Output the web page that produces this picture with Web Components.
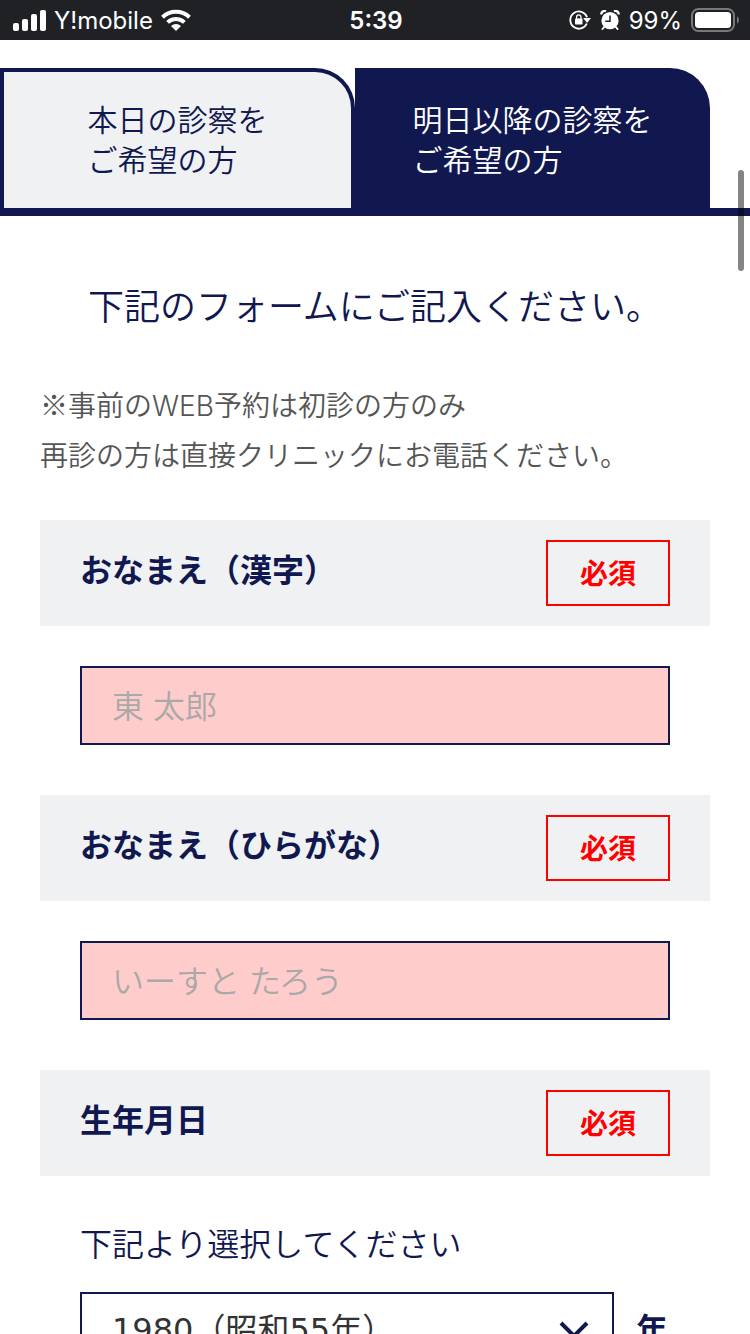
<!DOCTYPE html>
<html lang="ja">
<head>
<meta charset="utf-8">
<meta name="viewport" content="width=device-width">
<title>WEB予約フォーム</title>
<style>
:root { --navy: #111850; --panel: #f0f1f3; --red: #ff0000; --pink: #ffcccc; }
body { margin: 0; background: #fff; color: var(--navy); font-family: Inter, "Noto Sans CJK JP", sans-serif; font-weight: 350; }
</style>
</head>
<body>
<booking-page></booking-page>
<script>
const define = (name, html, setup) => {
  const template = document.createElement('template');
  template.innerHTML = html;
  customElements.define(name, class extends HTMLElement {
    constructor() {
      super();
      this.attachShadow({ mode: 'open' }).append(template.content.cloneNode(true));
    }
    connectedCallback() { if (setup) setup(this, this.shadowRoot); }
  });
};

define('status-bar', `
<style>
:host { display: grid; grid-template-columns: 1fr auto 1fr; align-items: center; height: 40px; padding: 0 11px 0 13px; background: #202125; color: #fff; font-size: 24px; line-height: 38px; font-weight: 400; }
div { display: flex; align-items: center; }
.left { gap: 8px; }
.right { justify-content: flex-end; gap: 9px; }
span { padding-top: 2px; }
.time { font-weight: 600; }
svg { display: block; flex: none; }
</style>
<div class="left">
  <svg width="33" height="21" viewBox="0 0 33 21" fill="#fff"><rect y="13" width="6" height="8" rx="2"/><rect x="9" y="9" width="6" height="12" rx="2"/><rect x="18" y="4" width="6" height="17" rx="2"/><rect x="27" width="6" height="21" rx="2"/></svg>
  <span>Y!mobile</span>
  <svg width="30" height="22" viewBox="0 0 30 22" fill="none" stroke="#fff" stroke-width="4"><path d="M1.500 8.200a19.500 19.500 0 0 1 27 0"/><path d="M6.600 13.400a12 12 0 0 1 16.800 0"/><path d="M15 22l-5-5.100a7.300 7.300 0 0 1 10 0z" fill="#fff" stroke="none"/></svg>
</div>
<div class="time"><span>5:39</span></div>
<div class="right">
  <svg width="22" height="20" viewBox="0 0 22 20"><path d="M17.800 13.500A8.600 8.600 0 1 1 18 7.200" fill="none" stroke="#fff" stroke-width="1.800"/><path d="M14.200 8h7.800L18 13z" fill="#fff"/><rect x="6" y="8.500" width="7.500" height="6" rx=".8" fill="#fff"/><path d="M7.600 9V7a2.150 2.150 0 0 1 4.300 0v2" fill="none" stroke="#fff" stroke-width="1.300"/></svg>
  <svg width="20" height="20" viewBox="0 0 20 20"><circle cx="10" cy="10.700" r="8.600" fill="#fff"/><path d="M1.300 4.500A3.400 3.400 0 0 1 6 1.200M18.700 4.500A3.400 3.400 0 0 0 14 1.200" fill="none" stroke="#fff" stroke-width="2.400"/><path d="M4.500 16.500l-2 2.500M15.500 16.500l2 2.500" stroke="#fff" stroke-width="2" stroke-linecap="round"/><path d="M10 5.500v5.700H5.300" fill="none" stroke="#202125" stroke-width="1.500"/></svg>
  <span>99%</span>
  <svg width="48" height="24" viewBox="0 0 48 24"><rect x="1" y="1" width="42" height="22" rx="6.500" fill="none" stroke="#77787b" stroke-width="2"/><rect x="4" y="4" width="36" height="16" rx="3.500" fill="#fff"/><path d="M46 8.500v7c2.600-1 2.600-6 0-7z" fill="#77787b"/></svg>
</div>`);

define('tab-link', `
<style>
:host { display: block; flex: 1; }
a { display: flex; justify-content: center; padding: 28px 0; border: 4px solid var(--navy); border-bottom: 0; border-radius: 0 40px 0 0; background: var(--panel); color: var(--navy); font-size: 30px; line-height: 40px; text-decoration: none; }
:host([active]) a { background: var(--navy); color: #fff; }
</style>
<a href="#"><span><slot></slot></span></a>`);

define('tab-bar', `
<style>
:host { display: flex; margin-top: 28px; padding-right: 40px; border-bottom: 8px solid var(--navy); }
</style>
<slot></slot>`);

define('field-header', `
<style>
:host { display: flex; justify-content: space-between; align-items: flex-start; padding: 20px 40px; background: var(--panel); font-weight: 700; }
.name { font-size: 32px; line-height: 62px; }
.badge { border: 2px solid var(--red); padding: 2px 32px 0; color: var(--red); font-size: 28px; line-height: 60px; }
</style>
<span class="name"><slot></slot></span><span class="badge">必須</span>`);

define('text-field', `
<style>
:host { display: block; margin-bottom: 50px; }
.body { padding: 40px 40px 0; }
input { display: block; box-sizing: border-box; width: 100%; height: 79px; padding: 2px 30px 0; border: 2px solid var(--navy); border-radius: 0; background: var(--pink); color: #333; font: inherit; font-size: 32px; outline: 0; }
input::placeholder { color: #a9a9a9; opacity: 1; }
</style>
<field-header><label for="field"></label></field-header>
<div class="body"><input id="field" type="text"></div>`, (host, root) => {
  const input = root.querySelector('input');
  root.querySelector('label').textContent = host.getAttribute('label');
  input.placeholder = host.getAttribute('placeholder');
});

define('birth-field', `
<style>
:host { display: block; padding-bottom: 50px; }
.body { padding: 44px 40px 0; }
label { display: block; font-size: 32px; line-height: 50px; }
.row { display: flex; align-items: center; gap: 22px; margin-top: 22px; }
.select { display: grid; flex: 1; align-items: center; }
select, svg { grid-area: 1 / 1; }
select { appearance: none; box-sizing: border-box; width: 100%; height: 76px; padding: 0 30px; border: 2px solid var(--navy); border-radius: 0; background: #fff; color: #333; font: inherit; font-family: "DejaVu Sans", "Noto Sans CJK JP", sans-serif; font-size: 32px; font-weight: 400; }
svg { justify-self: end; margin-right: 24px; pointer-events: none; }
.unit { font-size: 32px; line-height: 48px; font-weight: 700; padding-right: 2px; }
</style>
<field-header>生年月日</field-header>
<div class="body">
  <label for="year">下記より選択してください</label>
  <div class="row">
    <div class="select">
      <select id="year"><option>1980（昭和55年）</option></select>
      <svg width="32" height="18" viewBox="0 0 32 18" fill="none" stroke="#111850" stroke-width="4"><path d="M3 2l13 13L29 2"/></svg>
    </div>
    <span class="unit">年</span>
  </div>
</div>`);

define('scroll-thumb', `
<style>
:host { position: absolute; top: 170px; right: 6px; width: 6px; height: 101px; border-radius: 3px; background: rgba(0, 0, 0, .48); }
</style>`);

define('booking-page', `
<style>
:host { display: block; position: relative; }
h1 { margin: 66px 40px 49px; font-size: 36px; line-height: 50px; font-weight: inherit; text-align: center; }
.note { margin: 0 40px 39px; color: #555; font-size: 28px; line-height: 50px; }
.mark { font-family: "Noto Sans CJK JP", sans-serif; line-height: 28px; }
form { margin: 0 40px; }
</style>
<status-bar></status-bar>
<tab-bar>
  <tab-link>本日の診察を<br>ご希望の方</tab-link>
  <tab-link active>明日以降の診察を<br>ご希望の方</tab-link>
</tab-bar>
<h1>下記のフォームにご記入ください。</h1>
<p class="note"><span class="mark">※</span>事前のWEB予約は初診の方のみ<br>再診の方は直接クリニックにお電話ください。</p>
<form>
  <text-field label="おなまえ（漢字）" placeholder="東 太郎"></text-field>
  <text-field label="おなまえ（ひらがな）" placeholder="いーすと たろう"></text-field>
  <birth-field></birth-field>
</form>
<scroll-thumb></scroll-thumb>`);
</script>
</body>
</html>
